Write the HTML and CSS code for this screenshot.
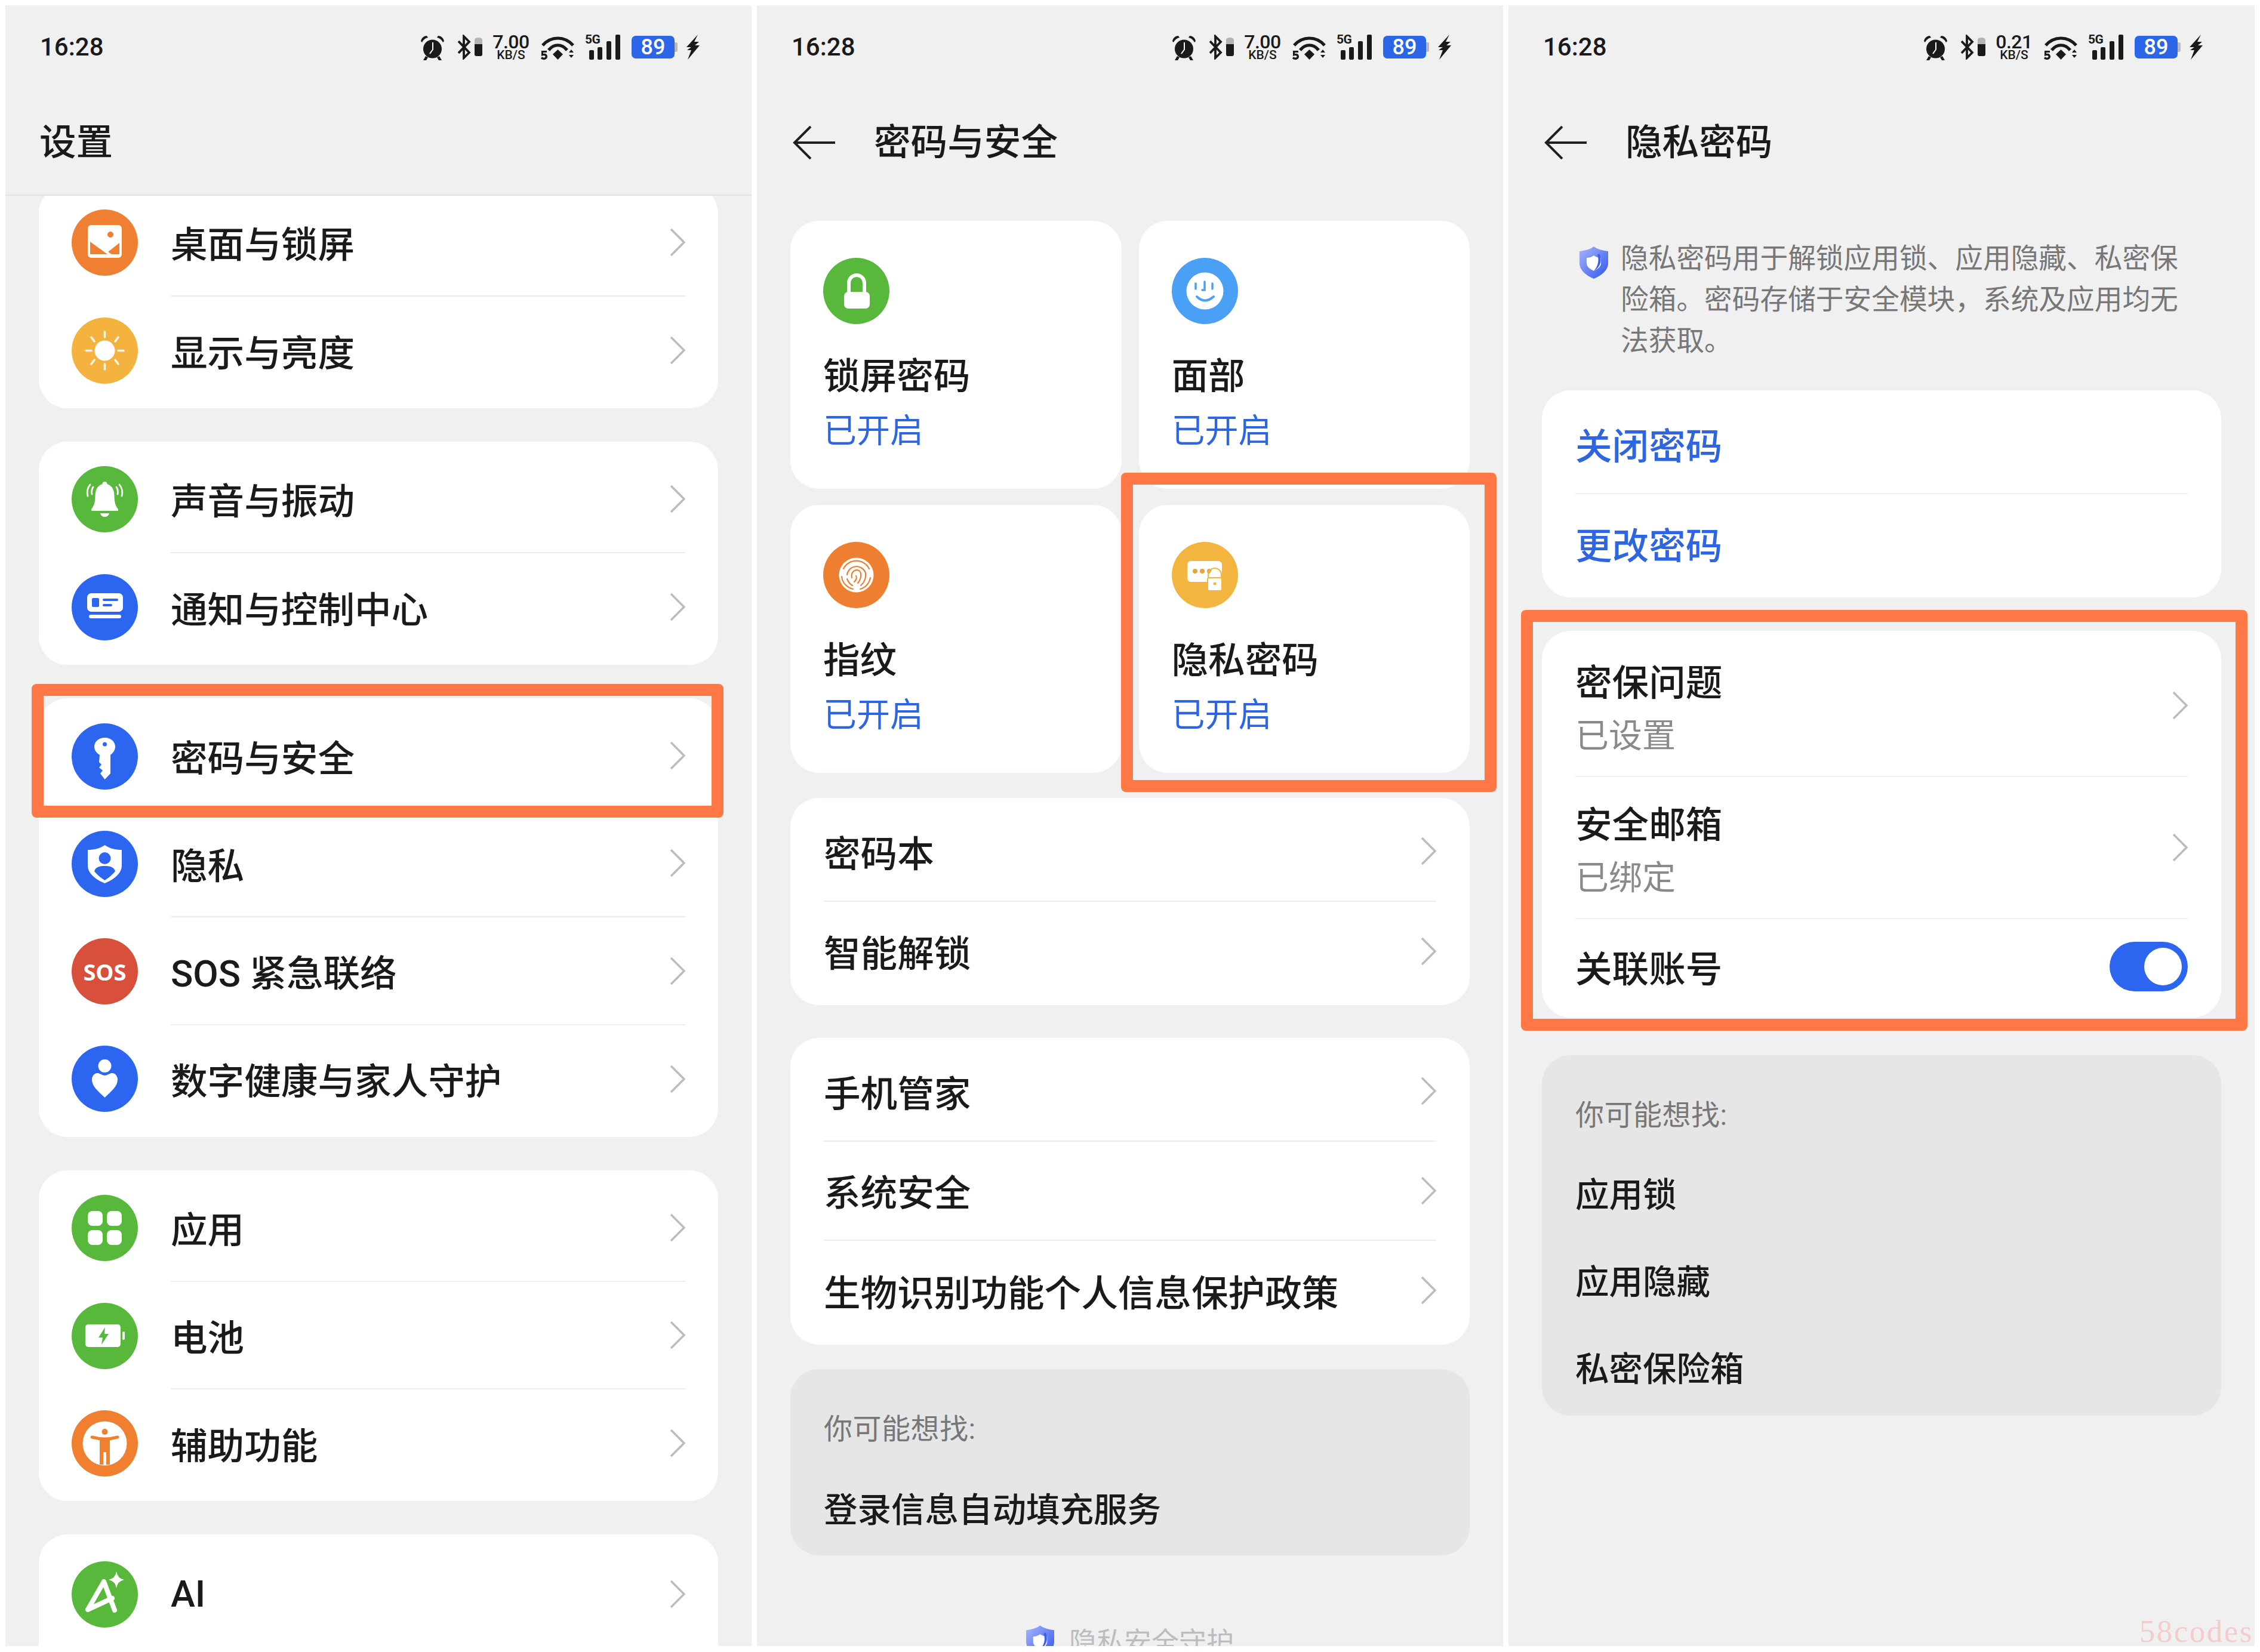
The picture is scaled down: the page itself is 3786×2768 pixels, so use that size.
FILE: index.html
```html
<!DOCTYPE html>
<html lang="zh-CN">
<head>
<meta charset="utf-8">
<title>设置</title>
<link rel="stylesheet" href="styles.css">
</head>
<body>
<svg class="sprite" aria-hidden="true">
  <defs>
    <linearGradient id="shieldGrad" x1="0" y1="0" x2="1" y2="1"><stop offset="0" stop-color="#a9b6fb"/><stop offset="1" stop-color="#2f55ee"/></linearGradient>
  </defs>
  <symbol id="s-alarm" viewBox="0 0 43 43"><circle cx="21.5" cy="24" r="15.5" fill="#1a1a1a"/><path d="M2 11 C3 5 8 2 12 2 L14 5 C9 6 6 9 4 13Z M41 11 C40 5 35 2 31 2 L29 5 C34 6 37 9 39 13Z" fill="#1a1a1a"/><path d="M10 36 L6 43 H11 L14 38Z M33 36 L37 43 H32 L29 38Z" fill="#1a1a1a"/><path d="M22 13 V25 L17 32" fill="none" stroke="#fff" stroke-width="2"/></symbol>
  <symbol id="s-bt" viewBox="0 0 41 42"><path d="M1 11 L19 30 L10 39 V3 L19 12 L1 31" fill="none" stroke="#1a1a1a" stroke-width="3.8"/><path d="M28 9 Q28 5 34.500 5 Q41 5 41 9 V16 H28Z" fill="#b4b4b4"/><path d="M28 16 H41 V33 Q41 36 38 36 H31 Q28 36 28 33Z" fill="#1a1a1a"/></symbol>
  <symbol id="s-wifi" viewBox="0 0 57 41"><path d="M3 17 C17 1 40 1 54 17" fill="none" stroke="#1a1a1a" stroke-width="5.200"/><path d="M13 25 C22 14 35 14 44 25" fill="none" stroke="#1a1a1a" stroke-width="5.200"/><path d="M20 32 L28.500 24 L37 32 L28.500 41Z" fill="#1a1a1a"/><path d="M47 29 L51 24 L55 29Z M47 33 H55 L51 38Z" fill="#1a1a1a"/><path d="M1 26 H10 V29 H4 V31 C8 30 11 32 11 36 C11 39 8 41 5 41 C3 41 1 40 0 39 L2 36 C4 38 7 38 7.500 36 C8 34 5 33 1 35Z" fill="#1a1a1a"/></symbol>
  <symbol id="s-bars" viewBox="0 0 52 42"><rect x="0" y="26" width="8" height="16" rx="2" fill="#1a1a1a"/><rect x="14" y="21" width="8" height="21" rx="2" fill="#1a1a1a"/><rect x="29" y="11" width="8" height="31" rx="2" fill="#1a1a1a"/><rect x="44" y="0" width="8" height="42" rx="2" fill="#1a1a1a"/></symbol>
  <symbol id="s-bolt" viewBox="0 0 24 42"><path d="M20 0 L1 21 L9 21 L2 26 L9 26 L3 42 L23 18 L15 18 L22 12 L14 12Z" fill="#1a1a1a"/></symbol>
  <symbol id="s-back" viewBox="0 0 71 56"><path d="M71 28 H3 M30 1 L3 28 L30 55" fill="none" stroke="#1f1f1f" stroke-width="4"/></symbol>
  <symbol id="s-chev" viewBox="0 0 25 46"><path d="M1 1 L23 23 L1 45" fill="none" stroke="#bcbcbc" stroke-width="3.600"/></symbol>
  <symbol id="s-shield" viewBox="0 0 48 54"><path d="M24 0 C30 5 40 7 48 8 V28 C48 40 36 49 24 54 C12 49 0 40 0 28 V8 C8 7 18 5 24 0Z" fill="url(#shieldGrad)"/><path d="M24 15 C28 18 33 19 36 19 V28 C36 34 30 38 24 41 C18 38 12 34 12 28 V19 C15 19 20 18 24 15Z" fill="#fff"/><path d="M33 12 C38 22 36 34 24 41 C32 32 33 22 30 14Z" fill="#3c5cf0"/></symbol>

  <symbol id="i-desk" viewBox="0 0 111 111"><circle cx="55.500" cy="55.500" r="55.500" fill="#ef7f31"/><rect x="27" y="26" width="57" height="55" rx="6" fill="#fff"/><circle cx="65" cy="42" r="5" fill="#ef7f31"/><path d="M31 54 L60 75 H31Z M80 56 V75 H67 L61 71Z" fill="#ef7f31"/></symbol>
  <symbol id="i-sun" viewBox="0 0 111 111"><circle cx="55.500" cy="55.500" r="55.500" fill="#f3b33e"/><circle cx="55.500" cy="55.500" r="17" fill="#fff"/><path d="M55.500 24 V33 M55.500 78 V87 M24 55.500 H33 M78 55.500 H87 M33 33 L38 40 M78 33 L73 40 M33 78 L38 71 M78 78 L73 71" stroke="#fff" stroke-width="3.500" stroke-linecap="round" fill="none" opacity=".85"/></symbol>
  <symbol id="i-bell" viewBox="0 0 111 111"><circle cx="55.500" cy="55.500" r="55.500" fill="#57b83c"/><path d="M55.500 26 C52.500 26 51.500 28 51.500 30 C42.500 33 39.500 41 39.500 50 C39.500 60 37.500 67 33 72 V75 H78 V72 C73.500 67 71.500 60 71.500 50 C71.500 41 68.500 33 59.500 30 C59.500 28 58.500 26 55.500 26Z M48 79 H63 C62 83 59 85 55.500 85 S49 83 48 79Z" fill="#fff"/><path d="M27 50 C25 43 27 36 31 31 M84 50 C86 43 84 36 80 31 M34 47 C33 42 34 38 36 35 M77 47 C78 42 77 38 75 35" fill="none" stroke="#fff" stroke-width="2.800" stroke-linecap="round"/></symbol>
  <symbol id="i-note" viewBox="0 0 111 111"><circle cx="55.500" cy="55.500" r="55.500" fill="#2c66f0"/><rect x="26" y="32" width="60" height="31" rx="7" fill="#fff"/><rect x="34" y="40" width="12" height="15" rx="2" fill="#2c66f0"/><rect x="52" y="41" width="26" height="4" rx="2" fill="#2c66f0"/><rect x="52" y="50" width="16" height="4" rx="2" fill="#2c66f0"/><rect x="29" y="68" width="54" height="6" rx="3" fill="#fff"/></symbol>
  <symbol id="i-key" viewBox="0 0 111 111"><circle cx="55.500" cy="55.500" r="55.500" fill="#2c66f0"/><path d="M55.500 24 C66 24 73 31 73 39 C73 45 69 50 65 53 V84 L55.500 94 L48 84 L52 79 L46 74 L50 69 L46 65 L47 53 C42 50 38 45 38 39 C38 31 45 24 55.500 24Z" fill="#fff"/><circle cx="55.500" cy="35" r="3.500" fill="#2c66f0"/></symbol>
  <symbol id="i-priv" viewBox="0 0 111 111"><circle cx="55.500" cy="55.500" r="55.500" fill="#2c66f0"/><path d="M55.500 24 C64 30 74 32 84 32 V58 C84 72 70 82 55.500 88 C41 82 27 72 27 58 V32 C37 32 47 30 55.500 24Z" fill="#fff"/><circle cx="55.500" cy="46" r="10" fill="#2c66f0"/><path d="M38 68 C40 60 48 59 55.500 59 C63 59 71 60 73 68 C68 74 62 79 55.500 83 C49 79 43 74 38 68Z" fill="#2c66f0"/></symbol>
  <symbol id="i-heart" viewBox="0 0 111 111"><circle cx="55.500" cy="55.500" r="55.500" fill="#2c66f0"/><circle cx="55.500" cy="34" r="11" fill="#fff"/><path d="M55.500 87 C44 76 34 68 34 57 C34 49 41 44 47 47 C50 48.500 53 50 55.500 50 C58 50 61 48.500 64 47 C70 44 77 49 77 57 C77 68 67 76 55.500 87Z" fill="#fff"/></symbol>
  <symbol id="i-apps" viewBox="0 0 111 111"><circle cx="55.500" cy="55.500" r="55.500" fill="#57b83c"/><rect x="27" y="27" width="25" height="25" rx="8" fill="#fff"/><rect x="59" y="27" width="25" height="25" rx="8" fill="#fff"/><rect x="27" y="59" width="25" height="25" rx="8" fill="#fff"/><rect x="59" y="59" width="25" height="25" rx="8" fill="#fff"/></symbol>
  <symbol id="i-batt" viewBox="0 0 111 111"><circle cx="55.500" cy="55.500" r="55.500" fill="#57b83c"/><rect x="23" y="36" width="59" height="38" rx="5" fill="#fff"/><rect x="85" y="48" width="4" height="14" rx="2" fill="#fff"/><path d="M56 41 L45 58 H52 L50 70 L62 52 H55Z" fill="#57b83c"/></symbol>
  <symbol id="i-access" viewBox="0 0 111 111"><circle cx="55.500" cy="55.500" r="55.500" fill="#f08030"/><circle cx="55.500" cy="55.500" r="37" fill="#fff"/><circle cx="55.500" cy="36" r="5" fill="#f08030"/><path d="M34 45 Q55.500 51 77 45" fill="none" stroke="#f08030" stroke-width="5" stroke-linecap="round"/><path d="M47 47 H64 V91 H58 V70 H53 V91 H47Z" fill="#f08030"/></symbol>
  <symbol id="i-ai" viewBox="0 0 111 111"><circle cx="55.500" cy="55.500" r="55.500" fill="#57b83c"/><path d="M27 81 L54 34 L72 82 M27 81 L68 62" fill="none" stroke="#fff" stroke-width="8" stroke-linejoin="round" stroke-linecap="round"/><path d="M75 17 Q77 29 88 31 Q77 33 75 45 Q73 33 62 31 Q73 29 75 17Z" fill="#fff"/></symbol>
  <symbol id="i-lock" viewBox="0 0 111 111"><circle cx="55.500" cy="55.500" r="55.500" fill="#57b83c"/><rect x="35" y="57" width="43" height="28" rx="7" fill="#fff"/><path d="M43 58 V42 A13 13 0 0 1 69 42 V58" fill="none" stroke="#fff" stroke-width="6"/></symbol>
  <symbol id="i-face" viewBox="0 0 111 111"><circle cx="55.500" cy="55.500" r="55.500" fill="#4aa0f5"/><circle cx="55.500" cy="55.500" r="31" fill="#fff"/><path d="M40 43 V52 M68 43 V52 M55 40 V54 H51" fill="none" stroke="#4aa0f5" stroke-width="3.500" stroke-linecap="round"/><path d="M42 65 Q55.500 78 70 65" fill="none" stroke="#4aa0f5" stroke-width="4" stroke-linecap="round"/></symbol>
  <symbol id="i-finger" viewBox="0 0 111 111"><circle cx="55.500" cy="55.500" r="55.500" fill="#ee7f30"/><circle cx="55.500" cy="55.500" r="29" fill="#fff"/><g fill="none" stroke="#ee7f30" stroke-width="2.200" stroke-linecap="round"><path d="M34 45 A24 24 0 0 1 77 45 M31 58 A24 24 0 0 0 50 79 M62 79 A24 24 0 0 0 79 60"/><path d="M40 55 A16 16 0 0 1 71 52 C72 60 69 68 63 73 M40 62 C42 67 45 71 49 73"/><path d="M48 60 C46 50 54 45 60 48 C65 52 64 62 58 69 M55 57 C57 60 55 64 52 67"/></g></symbol>
  <symbol id="i-pwd" viewBox="0 0 111 111"><circle cx="55.500" cy="55.500" r="55.500" fill="#f3b53f"/><rect x="26" y="32" width="58" height="35" rx="6" fill="#fff"/><circle cx="39" cy="49" r="4" fill="#e8a43a"/><circle cx="51" cy="49" r="4" fill="#e8a43a"/><circle cx="63" cy="49" r="4" fill="#e8a43a"/><path d="M65 62 V55 A7 7 0 0 1 79 55 V62" fill="none" stroke="#fff" stroke-width="3"/><path d="M61 62 V55 A11 11 0 0 1 83 55 V62" fill="none" stroke="#f3b53f" stroke-width="2"/><rect x="60" y="60" width="24" height="22" rx="3" fill="#fff" stroke="#f3b53f" stroke-width="2"/><circle cx="72" cy="70" r="2.500" fill="#f3b53f"/></symbol>
</svg>

<main class="board">

  <section class="panel">
    <header class="head head-line">
      <div class="status">
        <span class="time">16:28</span>
        <div class="tray">
          <svg class="t-alarm"><use href="#s-alarm"/></svg>
          <svg class="t-bt"><use href="#s-bt"/></svg>
          <span class="speed"><b>7.00</b><i>KB/S</i></span>
          <svg class="t-wifi"><use href="#s-wifi"/></svg>
          <span class="signal"><em>5G</em><svg class="t-bars"><use href="#s-bars"/></svg></span>
          <span class="batt">89</span>
          <svg class="t-bolt"><use href="#s-bolt"/></svg>
        </div>
      </div>
      <div class="nav"><h1 class="title title-root">设置</h1></div>
    </header>
    <div class="list list-scrolled">
      <div class="card">
        <div class="row"><svg class="ico"><use href="#i-desk"/></svg><div class="body"><span>桌面与锁屏</span><svg class="chev"><use href="#s-chev"/></svg></div></div>
        <div class="row"><svg class="ico"><use href="#i-sun"/></svg><div class="body"><span>显示与亮度</span><svg class="chev"><use href="#s-chev"/></svg></div></div>
      </div>
      <div class="card">
        <div class="row"><svg class="ico"><use href="#i-bell"/></svg><div class="body"><span>声音与振动</span><svg class="chev"><use href="#s-chev"/></svg></div></div>
        <div class="row"><svg class="ico"><use href="#i-note"/></svg><div class="body"><span>通知与控制中心</span><svg class="chev"><use href="#s-chev"/></svg></div></div>
      </div>
      <div class="card">
        <div class="row"><svg class="ico"><use href="#i-key"/></svg><div class="body"><span>密码与安全</span><svg class="chev"><use href="#s-chev"/></svg></div></div>
        <div class="row"><svg class="ico"><use href="#i-priv"/></svg><div class="body"><span>隐私</span><svg class="chev"><use href="#s-chev"/></svg></div></div>
        <div class="row"><span class="ico ico-sos">SOS</span><div class="body"><span>SOS 紧急联络</span><svg class="chev"><use href="#s-chev"/></svg></div></div>
        <div class="row"><svg class="ico"><use href="#i-heart"/></svg><div class="body"><span>数字健康与家人守护</span><svg class="chev"><use href="#s-chev"/></svg></div></div>
      </div>
      <div class="card">
        <div class="row"><svg class="ico"><use href="#i-apps"/></svg><div class="body"><span>应用</span><svg class="chev"><use href="#s-chev"/></svg></div></div>
        <div class="row"><svg class="ico"><use href="#i-batt"/></svg><div class="body"><span>电池</span><svg class="chev"><use href="#s-chev"/></svg></div></div>
        <div class="row"><svg class="ico"><use href="#i-access"/></svg><div class="body"><span>辅助功能</span><svg class="chev"><use href="#s-chev"/></svg></div></div>
      </div>
      <div class="card card-open">
        <div class="row"><svg class="ico"><use href="#i-ai"/></svg><div class="body"><span>AI</span><svg class="chev"><use href="#s-chev"/></svg></div></div>
      </div>
    </div>
    <div class="mark mark-a"></div>
  </section>

  <section class="panel">
    <header class="head">
      <div class="status">
        <span class="time">16:28</span>
        <div class="tray">
          <svg class="t-alarm"><use href="#s-alarm"/></svg>
          <svg class="t-bt"><use href="#s-bt"/></svg>
          <span class="speed"><b>7.00</b><i>KB/S</i></span>
          <svg class="t-wifi"><use href="#s-wifi"/></svg>
          <span class="signal"><em>5G</em><svg class="t-bars"><use href="#s-bars"/></svg></span>
          <span class="batt">89</span>
          <svg class="t-bolt"><use href="#s-bolt"/></svg>
        </div>
      </div>
      <div class="nav"><svg class="back"><use href="#s-back"/></svg><h1 class="title">密码与安全</h1></div>
    </header>
    <div class="tiles">
      <div class="tile"><svg class="ico"><use href="#i-lock"/></svg><div class="tile-name">锁屏密码</div><div class="tile-state">已开启</div></div>
      <div class="tile"><svg class="ico"><use href="#i-face"/></svg><div class="tile-name">面部</div><div class="tile-state">已开启</div></div>
      <div class="tile"><svg class="ico"><use href="#i-finger"/></svg><div class="tile-name">指纹</div><div class="tile-state">已开启</div></div>
      <div class="tile"><svg class="ico"><use href="#i-pwd"/></svg><div class="tile-name">隐私密码</div><div class="tile-state">已开启</div></div>
    </div>
    <div class="list list-after-tiles">
      <div class="card">
        <div class="row row-plain"><div class="body"><span>密码本</span><svg class="chev"><use href="#s-chev"/></svg></div></div>
        <div class="row row-plain"><div class="body"><span>智能解锁</span><svg class="chev"><use href="#s-chev"/></svg></div></div>
      </div>
      <div class="card">
        <div class="row row-plain"><div class="body"><span>手机管家</span><svg class="chev"><use href="#s-chev"/></svg></div></div>
        <div class="row row-plain"><div class="body"><span>系统安全</span><svg class="chev"><use href="#s-chev"/></svg></div></div>
        <div class="row row-plain"><div class="body"><span>生物识别功能个人信息保护政策</span><svg class="chev"><use href="#s-chev"/></svg></div></div>
      </div>
      <div class="suggest suggest-near">
        <div class="hint">你可能想找:</div>
        <div class="items"><div>登录信息自动填充服务</div></div>
      </div>
    </div>
    <div class="foot"><svg class="foot-ico"><use href="#s-shield"/></svg><span>隐私安全守护</span></div>
    <div class="mark mark-b"></div>
  </section>

  <section class="panel">
    <header class="head">
      <div class="status">
        <span class="time">16:28</span>
        <div class="tray">
          <svg class="t-alarm"><use href="#s-alarm"/></svg>
          <svg class="t-bt"><use href="#s-bt"/></svg>
          <span class="speed"><b>0.21</b><i>KB/S</i></span>
          <svg class="t-wifi"><use href="#s-wifi"/></svg>
          <span class="signal"><em>5G</em><svg class="t-bars"><use href="#s-bars"/></svg></span>
          <span class="batt">89</span>
          <svg class="t-bolt"><use href="#s-bolt"/></svg>
        </div>
      </div>
      <div class="nav"><svg class="back"><use href="#s-back"/></svg><h1 class="title">隐私密码</h1></div>
    </header>
    <div class="info">
      <svg class="info-ico"><use href="#s-shield"/></svg>
      <p class="info-text">隐私密码用于解锁应用锁、应用隐藏、私密保险箱。密码存储于安全模块，系统及应用均无法获取。</p>
    </div>
    <div class="list list-after-info">
      <div class="card">
        <div class="row row-plain link"><div class="body"><span>关闭密码</span></div></div>
        <div class="row row-plain link"><div class="body"><span>更改密码</span></div></div>
      </div>
      <div class="card">
        <div class="row row-plain row-two"><div class="body"><div class="stack"><span>密保问题</span><small>已设置</small></div><svg class="chev"><use href="#s-chev"/></svg></div></div>
        <div class="row row-plain row-two"><div class="body"><div class="stack"><span>安全邮箱</span><small>已绑定</small></div><svg class="chev"><use href="#s-chev"/></svg></div></div>
        <div class="row row-plain row-end"><div class="body"><span>关联账号</span><span class="toggle"></span></div></div>
      </div>
      <div class="suggest suggest-far">
        <div class="hint">你可能想找:</div>
        <div class="items"><div>应用锁</div><div>应用隐藏</div><div>私密保险箱</div></div>
      </div>
    </div>
    <div class="mark mark-c"></div>
    <div class="watermark">58codes</div>
  </section>

</main>
</body>
</html>
```

FILE: styles.css
```css
* { box-sizing: border-box; }
html, body { margin: 0; padding: 0; background: #fff; }
body {
  width: 3786px;
  height: 2768px;
  overflow: hidden;
  font-family: Roboto, "Noto Sans CJK SC", sans-serif;
  color: #1a1a1a;
}
.sprite { position: absolute; width: 0; height: 0; }

.board { display: flex; gap: 9px; padding: 9px; }
.panel {
  position: relative;
  width: 1250px;
  height: 2749px;
  overflow: hidden;
  background: #f0f0f1;
  flex: none;
}

/* header */
.head {
  position: relative;
  z-index: 1;
  height: 319px;
  padding-top: 48px;
  background: #f0f0f1;
}
.head-line { border-bottom: 2px solid #e2e2e2; }
.status {
  display: flex;
  align-items: center;
  justify-content: space-between;
  height: 44px;
  padding: 0 86px 0 58px;
}
.time { font-size: 42px; font-weight: 500; line-height: 44px; }
.tray { display: flex; align-items: center; }
.t-alarm { width: 43px; height: 43px; margin-right: 21px; }
.t-bt { width: 41px; height: 42px; margin-right: 17px; }
.speed { display: flex; flex-direction: column; align-items: center; width: 62px; margin-right: 19px; }
.speed b { font-size: 32px; line-height: 25px; font-weight: 500; letter-spacing: -.5px; }
.speed i { font-size: 21px; line-height: 18px; font-style: normal; font-weight: 500; }
.t-wifi { width: 57px; height: 41px; margin-right: 17px; }
.signal { position: relative; display: block; width: 59px; height: 42px; margin-right: 19px; }
.signal em {
  position: absolute; left: 0; top: -4px;
  font-size: 21px; line-height: 24px; font-style: normal; font-weight: 700; letter-spacing: -.5px;
}
.t-bars { position: absolute; left: 7px; top: 0; width: 52px; height: 42px; }
.batt {
  position: relative;
  width: 72px; height: 38px;
  margin-right: 19px;
  border-radius: 7px;
  background: #2c66e8;
  color: #fff;
  font-size: 36px; font-weight: 500; line-height: 38px;
  text-align: center;
}
.batt::after {
  content: "";
  position: absolute; left: 72px; top: 11px;
  width: 5px; height: 16px;
  border-radius: 0 3px 3px 0;
  background: #b9b9b9;
}
.t-bolt { width: 24px; height: 42px; }

.nav {
  display: flex;
  align-items: center;
  gap: 65px;
  height: 164px;
  margin-top: 56px;
  padding-left: 60px;
}
.back { width: 71px; height: 56px; flex: none; }
.title { margin: 0; font-size: 61.600px; line-height: 80px; font-weight: 500; }
.title-root { margin-left: -3px; }

/* list cards */
.list { display: flex; flex-direction: column; gap: 55.500px; padding: 0 56px; }
.list-scrolled { margin-top: -18.300px; }
.list-after-tiles { margin-top: 42px; gap: 55px; }
.list-after-info { margin-top: 48px; gap: 56px; }
.card { background: #fff; border-radius: 48px; padding: 7px 0; }
.card-open { padding-top: 10px; padding-bottom: 120px; }
.row {
  display: flex;
  align-items: center;
  gap: 55px;
  height: 180.300px;
  padding: 0 55px;
}
.ico { width: 111px; height: 111px; flex: none; display: block; }
.ico-sos {
  display: flex; align-items: center; justify-content: center;
  border-radius: 50%;
  background: #d84f3c;
  color: #fff;
  font-family: "Open Sans", sans-serif;
  font-size: 38px; font-weight: 700;
}
.body {
  flex: 1;
  display: flex;
  align-items: center;
  justify-content: space-between;
  align-self: stretch;
  font-size: 61.600px;
  font-weight: 500;
  border-bottom: 2px solid #ededed;
}
.row:last-child .body { border-bottom: 0; }
.chev { width: 25px; height: 46px; flex: none; }

.row-plain { height: 166.500px; padding: 0 56px; }
.row-two { height: 238px; }
.row-end { height: 158px; }
.link .body { color: #2d66e0; }
.stack { display: flex; flex-direction: column; gap: 13px; padding-top: 9px; }
.stack span { line-height: 80px; }
.stack small { font-size: 56px; line-height: 70px; font-weight: 400; color: #8a8a8a; }

.toggle {
  position: relative;
  width: 131px; height: 83px;
  border-radius: 42px;
  background: #2c66f0;
}
.toggle::after {
  content: "";
  position: absolute; right: 10px; top: 10px;
  width: 63px; height: 63px;
  border-radius: 50%;
  background: #fff;
}

/* tiles */
.tiles {
  display: grid;
  grid-template-columns: 1fr 1fr;
  gap: 27px 29px;
  margin: 42px 56px 0;
}
.tile {
  height: 449px;
  padding: 62px 55px;
  border-radius: 48px;
  background: #fff;
}
.tile-name { margin-top: 48px; font-size: 61.600px; line-height: 80px; font-weight: 500; }
.tile-state { margin-top: 16px; font-size: 56px; line-height: 70px; color: #2d66e0; }

/* suggestions */
.suggest {
  padding: 65px 56px 35px;
  border-radius: 48px;
  background: #e6e6e6;
}
.suggest-near { margin-top: -14px; }
.suggest-far { margin-top: 7px; padding-bottom: 37px; }
.suggest-far .hint { margin-bottom: 58px; }
.hint { margin-bottom: 60px; font-size: 48px; line-height: 72px; letter-spacing: .5px; color: #777; }
.items {
  display: flex;
  flex-direction: column;
  gap: 66px;
  font-size: 56.500px;
  line-height: 80px;
  font-weight: 500;
}

/* footer */
.foot {
  display: flex;
  justify-content: center;
  gap: 25px;
  margin-top: 115px;
  font-size: 46px;
  line-height: 60px;
  color: #bdbdbd;
}
.foot-ico { width: 47px; height: 54px; margin-top: 2px; flex: none; }

/* intro */
.info { display: flex; margin-top: 71px; padding-left: 119px; gap: 21px; }
.info-ico { width: 48px; height: 54px; margin-top: 14px; flex: none; }
.info-text {
  width: 940px;
  margin: 0;
  font-size: 46.700px;
  line-height: 69px;
  color: #777;
}

/* highlight frames */
.mark {
  position: absolute;
  z-index: 2;
  border: 20px solid #ff7845;
  border-radius: 8px;
}
.mark-a { left: 44px; top: 1137px; width: 1159px; height: 224px; }
.mark-b { left: 610px; top: 783px; width: 629px; height: 535px; }
.mark-c { left: 21px; top: 1013px; width: 1217px; height: 705px; }

.watermark {
  position: absolute;
  z-index: 3;
  right: 2px;
  bottom: -2px;
  font-family: "Liberation Serif", serif;
  font-size: 53px;
  line-height: 53px;
  letter-spacing: 2.500px;
  color: #f3cccc;
}
```
